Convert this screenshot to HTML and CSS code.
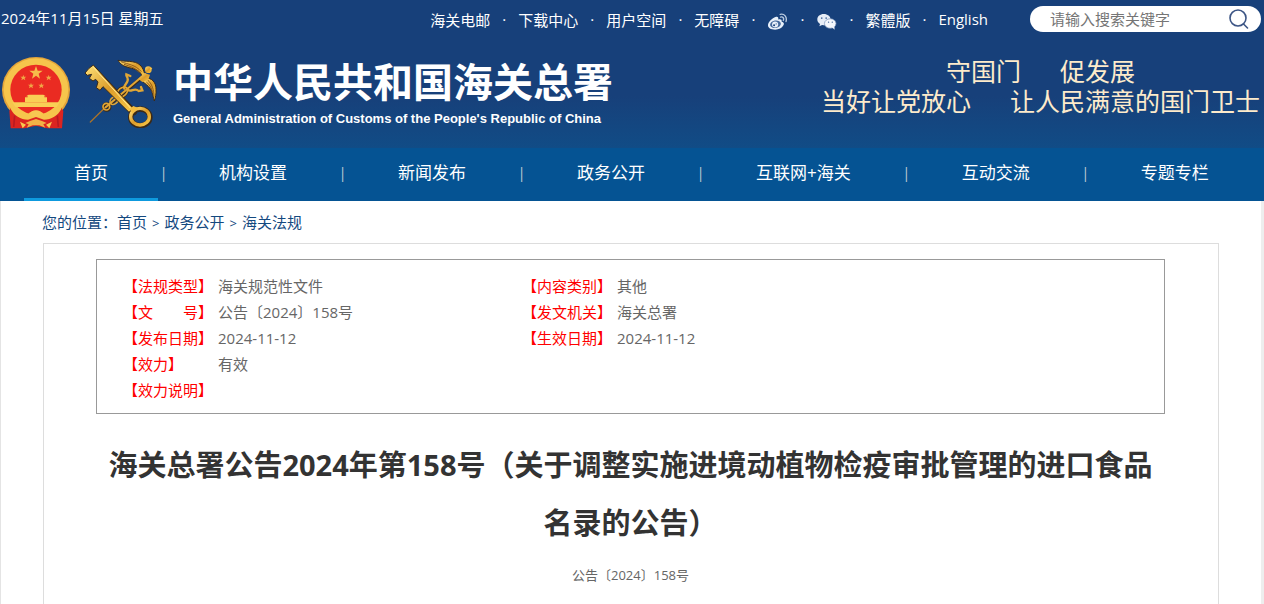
FILE: index.html
```
<!DOCTYPE html>
<html lang="zh-CN">
<head>
    <meta charset="UTF-8">
    <meta name="viewport" content="width=device-width, initial-scale=1.0">
    <title>海关总署公告2024年第158号</title>
    <link rel="stylesheet" href="styles.css">
</head>
<body>
    <header class="header">
        <div class="topbar">
            <span class="date">2024年11月15日 星期五</span>
            <div class="top-links">
                <a href="#">海关电邮</a><span class="dot">·</span>
                <a href="#">下载中心</a><span class="dot">·</span>
                <a href="#">用户空间</a><span class="dot">·</span>
                <a href="#">无障碍</a><span class="dot">·</span>
                <a href="#" class="icon-link" aria-label="微博">
                    <svg viewBox="0 0 60 50" width="21" height="17">
                        <path d="M24 12c6-3 10 1 8 7 6-2 12-1 10 6 7 2 9 7 5 12-4 8-13 12-24 12C10 49 2 44 2 36c0-9 13-21 22-24z" fill="#e8f0fa"/>
                        <ellipse cx="24" cy="33" rx="16" ry="11" fill="#466a9d" transform="rotate(-10 24 33)"/>
                        <circle cx="23" cy="34" r="9" fill="#e8f0fa"/>
                        <circle cx="20" cy="36" r="3" fill="#174079"/>
                        <circle cx="26" cy="32" r="1.5" fill="#174079"/>
                        <path d="M38 4c12-3 21 8 17 21M39 12c7-2 11 4 8 10" fill="none" stroke="#b9cae0" stroke-width="4" stroke-linecap="round"/>
                    </svg>
                </a><span class="dot">·</span>
                <a href="#" class="icon-link" aria-label="微信">
                    <svg viewBox="0 0 60 50" width="21" height="17">
                        <path d="M22 3C11 3 3 10 3 19c0 6 3 10 8 13l-2 7 8-4c3 1 6 1 9 1C42 35 42 25 42 19 42 10 33 3 22 3z" fill="#e6edf7"/>
                        <ellipse cx="41" cy="31" rx="17" ry="14" fill="#f4f7fc" stroke="#7791b7" stroke-width="2"/>
                        <path d="M46 42l8 7-1-10z" fill="#f4f7fc"/>
                        <circle cx="16" cy="15" r="2.5" fill="#466a9d"/>
                        <circle cx="29" cy="15" r="2.5" fill="#466a9d"/>
                        <circle cx="36" cy="27" r="2" fill="#466a9d"/>
                        <circle cx="47" cy="27" r="2" fill="#466a9d"/>
                    </svg>
                </a><span class="dot">·</span>
                <a href="#">繁體版</a><span class="dot">·</span>
                <a href="#">English</a>
            </div>
            <form class="search">
                <input type="text" aria-label="搜索" placeholder="请输入搜索关键字">
                <button type="button" aria-label="搜索">
                    <svg viewBox="0 0 20 20" width="20" height="20" fill="none" stroke="#3c5585" stroke-width="1.6">
                        <circle cx="9" cy="9" r="8"/>
                        <path d="M14.5 15l4 4" stroke-linecap="round"/>
                    </svg>
                </button>
            </form>
        </div>

        <div class="brand">
            <svg class="emblem" viewBox="0 0 204 216" width="68" height="72">
                <ellipse cx="102" cy="98" rx="102" ry="98" fill="#e3a43a"/>
                <ellipse cx="102" cy="97" rx="97" ry="93" fill="#f6c54c"/>
                <ellipse cx="102" cy="98" rx="77" ry="75" fill="#ea2b22"/>
                <path d="M31 136h142l-9 14H40z" fill="#f9cf55"/>
                <path d="M69 121h66v15H69zM77 116h50v5H77zM72 118l8-5h44l8 5z" fill="#f9cf55"/>
                <path d="M102 27l5 14h15l-12 9 4 15-12-9-12 9 4-15-12-9h15z" fill="#f6bd4b"/>
                <g fill="#f0a646">
                    <path id="star" d="M64 53l2 6h7l-5 4 2 7-6-4-6 4 2-7-5-4h7z"/>
                    <use href="#star" x="76"/>
                    <use href="#star" x="23" y="24"/>
                    <use href="#star" x="54" y="24"/>
                </g>
                <path d="M28 150c8 16 22 25 38 30l36-8 36 8c16-5 30-14 38-30l8 12-4 52h-44l-34-8-34 8H26l-4-52z" fill="#dc2420"/>
                <path d="M28 146c14 20 32 27 50 26 8-14 40-14 48 0 18 1 36-6 50-26l2 10c-10 20-30 32-52 32l-24-8-24 8c-22 0-42-12-52-32z" fill="#f6c54c"/>
                <ellipse cx="102" cy="170" rx="17" ry="10" fill="#f7c852"/>
                <path d="M84 192l18-6 18 6 14 6-10 4 6 10-18-7h-20l-18 7 6-10-10-4z" fill="#f2b246"/>
                <path d="M54 194l18 9-10 11zM150 194l-18 9 10 11z" fill="#f8c950"/>
                <path d="M38 176l-3 34M166 176l3 34" stroke="#b91a21" stroke-width="5"/>
            </svg>
            <svg class="customs" viewBox="14 28 216 210" width="72" height="70">
                <defs>
                    <linearGradient id="gold" x1="0" y1="0" x2="1" y2="1">
                        <stop offset="0" stop-color="#ffe27a"/>
                        <stop offset="0.5" stop-color="#dc9c2a"/>
                        <stop offset="1" stop-color="#f8c848"/>
                    </linearGradient>
                </defs>
                <g fill="none" stroke="#3b2a18" stroke-linecap="round">
                    <path d="M42 66l118 124" stroke-width="20"/>
                    <ellipse cx="180" cy="206" rx="29" ry="25" stroke-width="16"/>
                    <path d="M80 174L190 82" stroke-width="10"/>
                    <circle cx="79" cy="175" r="10" stroke-width="9"/>
                    <ellipse cx="126" cy="130" rx="18" ry="12" transform="rotate(-40 126 130)" stroke-width="9"/>
                </g>
                <path d="M30 220l46-45" stroke="#a8722b" stroke-width="4" stroke-linecap="round"/>
                <g fill="none" stroke="#e0a636" stroke-linecap="round">
                    <path d="M76 176L194 76" stroke-width="6"/>
                    <circle cx="78" cy="174" r="10" stroke-width="5"/>
                    <ellipse cx="101" cy="156" rx="13" ry="10" transform="rotate(-40 101 156)" stroke-width="5"/>
                    <ellipse cx="126" cy="130" rx="18" ry="12" transform="rotate(-40 126 130)" stroke-width="5"/>
                    <path d="M132 120c-4-12 14-18 10-30-1-6-5-7-4-13l12 5M142 123c10 10 20-8 33 4l11-2-4-10" stroke-width="7"/>
                </g>
                <path d="M185 82c-8-22-28-21-45-27-15-4-22-12-27-20 22 5 50-1 66 14 9 8 11 18 14 26z" fill="url(#gold)" stroke="#3b2a18" stroke-width="3"/>
                <path d="M193 88c22-2 35 14 34 35 1 13-2 24-5 34-6-19-3-25-13-38-7-9-13-13-22-20z" fill="url(#gold)" stroke="#3b2a18" stroke-width="3"/>
                <path d="M122 39c22 9 42 8 61 30M131 47c17 6 33 9 46 25M201 93c14 12 20 31 20 51M198 100c12 9 17 21 19 34" fill="none" stroke="#8f5c1c" stroke-width="3"/>
                <path d="M174 91l17-18 18 5-5 15-18 7z" fill="url(#gold)"/>
                <circle cx="204" cy="63" r="10" fill="url(#gold)"/>
                <path d="M207 56l9 2-5 7z" fill="#f6c54c"/>
                <path d="M39 49l119 130-12 12-78-77-9 11-11-8 5-17-7-8-8 5-11-8 7-12-13 3-7-7 12-14z" fill="url(#gold)" stroke="#3b2a18" stroke-width="3"/>
                <path d="M39 56l113 124" stroke="#ffe996" stroke-width="3"/>
                <ellipse cx="179" cy="204" rx="28" ry="25" fill="none" stroke="url(#gold)" stroke-width="10"/>
                <path d="M148 181l11-9 16 7-18 17z" fill="#f3bd42"/>
            </svg>
            <div class="site-name">
                <div class="name-cn">中华人民共和国海关总署</div>
                <div class="name-en">General Administration of Customs of the People's Republic of China</div>
            </div>
            <div class="slogan">
                <div class="slogan-row"><span>守国门</span><span>促发展</span></div>
                <div class="slogan-row"><span>当好让党放心</span><span>让人民满意的国门卫士</span></div>
            </div>
        </div>
    </header>

    <nav class="nav">
        <a href="#" class="active">首页</a><span class="sep">|</span>
        <a href="#">机构设置</a><span class="sep">|</span>
        <a href="#">新闻发布</a><span class="sep">|</span>
        <a href="#">政务公开</a><span class="sep">|</span>
        <a href="#">互联网+海关</a><span class="sep">|</span>
        <a href="#">互动交流</a><span class="sep">|</span>
        <a href="#">专题专栏</a>
    </nav>

    <main class="main">
        <div class="position">
            <span>您的位置：</span><a href="#">首页</a><span class="gt">&gt;</span><a href="#">政务公开</a><span class="gt">&gt;</span><a href="#">海关法规</a>
        </div>
        <article class="article">
            <div class="info">
                <dl>
                    <div><dt>【法规类型】</dt><dd>海关规范性文件</dd></div>
                    <div><dt>【文　　号】</dt><dd>公告〔2024〕158号</dd></div>
                    <div><dt>【发布日期】</dt><dd>2024-11-12</dd></div>
                    <div><dt>【效力】</dt><dd>有效</dd></div>
                    <div><dt>【效力说明】</dt><dd></dd></div>
                </dl>
                <dl>
                    <div><dt>【内容类别】</dt><dd>其他</dd></div>
                    <div><dt>【发文机关】</dt><dd>海关总署</dd></div>
                    <div><dt>【生效日期】</dt><dd>2024-11-12</dd></div>
                </dl>
            </div>
            <h1 class="title">海关总署公告2024年第158号（关于调整实施进境动植物检疫审批管理的进口食品名录的公告）</h1>
            <p class="doc-no">公告〔2024〕158号</p>
        </article>
    </main>
</body>
</html>
```
FILE: styles.css
```
* {
    box-sizing: border-box;
}
body {
    margin: 0;
    font-family: "Open Sans", "Noto Sans CJK SC", sans-serif;
    font-size: 15px;
    color: #666;
    background-color: #fff;
}
a {
    color: inherit;
    text-decoration: none;
}
svg {
    display: block;
    flex: none;
}
.header {
    color: #fff;
    background: linear-gradient(#17407a 0%, #17407a 65%, #114c86 100%);
}
.topbar {
    display: flex;
    align-items: center;
    height: 38px;
    padding: 0 3px 0 1px;
    white-space: nowrap;
}
.date {
    line-height: 36px;
    align-self: flex-start;
}
.top-links {
    display: flex;
    align-items: center;
    gap: 12px;
    margin-left: auto;
    margin-right: 42px;
}
.icon-link {
    padding-top: 4px;
}
.dot {
    width: 4px;
    text-align: center;
}
.search {
    display: flex;
    align-items: center;
    width: 231px;
    height: 26px;
    padding: 0 12px 0 20px;
    border-radius: 13px;
    background-color: #fff;
}
.search input {
    flex: 1;
    min-width: 0;
    padding: 0;
    border: none;
    outline: none;
    background: none;
    font-family: inherit;
    font-size: 15px;
}
.search input::placeholder {
    color: #757575;
}
.search button {
    padding: 0;
    border: none;
    background: none;
    cursor: pointer;
}
.brand {
    display: flex;
    align-items: center;
    height: 110px;
    padding: 0 4px 0 2px;
    white-space: nowrap;
}
.customs {
    margin-left: 15px;
}
.site-name {
    margin-left: 16px;
}
.name-cn {
    font-size: 40px;
    font-weight: bold;
    line-height: 48px;
}
.name-en {
    padding-top: 3px;
    font-family: "Liberation Sans", Arial, sans-serif;
    font-size: 13px;
    font-weight: bold;
    line-height: 20px;
}
.slogan {
    margin-left: auto;
    margin-bottom: 12px;
    font-family: "Liberation Sans", "Noto Sans CJK SC", sans-serif;
    font-size: 25px;
    line-height: 30px;
    color: #fdebcb;
}
.slogan-row {
    display: flex;
    justify-content: center;
    gap: 39px;
}
.nav {
    display: flex;
    height: 53px;
    padding-left: 24px;
    background-color: #055393;
    color: #fff;
    font-size: 17px;
    line-height: 50px;
    white-space: nowrap;
}
.nav a {
    padding: 0 50px;
}
.nav a.active,
.nav a:hover {
    border-bottom: 3px solid #0e9ade;
}
.sep {
    width: 11px;
    font-size: 14px;
    text-align: center;
    color: #c3cbd2;
}
.main {
    padding: 0 42px 0 41px;
    border-left: 1px solid #e4e4e4;
    border-right: 3px solid #eee;
}
.position {
    height: 42px;
    line-height: 42px;
    color: #14497f;
}
.gt {
    margin: 0 5px;
    font-size: 13px;
}
.article {
    margin-left: 1px;
    padding: 15px 53px 20px 52px;
    border: 1px solid #ddd;
    border-bottom: none;
}
.info {
    display: grid;
    grid-template-columns: 399px 1fr;
    padding: 13px 26px 10px;
    border: 1px solid #999;
}
.info dl {
    margin: 0;
}
.info dl div {
    display: flex;
    height: 26px;
    line-height: 26px;
}
.info dt {
    width: 95px;
    color: #f00;
}
.info dd {
    margin: 0;
}
.title {
    margin: 22px 0 0;
    font-size: 29px;
    line-height: 58px;
    text-align: center;
    color: #333;
}
.doc-no {
    margin: 11px 0 0;
    font-size: 13px;
    line-height: 24px;
    text-align: center;
}
```
